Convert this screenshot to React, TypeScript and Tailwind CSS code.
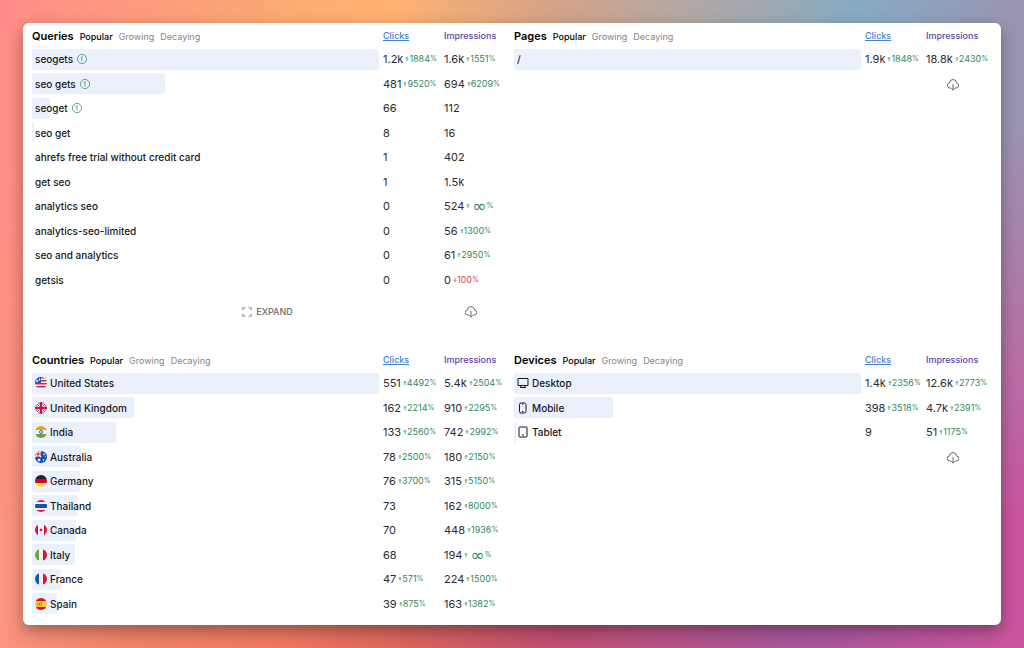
import { useState, type ReactNode } from "react";
import { clsx } from "clsx";

type Trend = { dir: "up" | "down"; value: string };

type Row = {
  label: string;
  bar: number;
  icon?: ReactNode;
  badge?: boolean;
  clicks: string;
  clicksTrend?: Trend;
  impressions: string;
  impressionsTrend?: Trend;
};

const up = (value: string): Trend => ({ dir: "up", value });
const down = (value: string): Trend => ({ dir: "down", value });

const flags: Record<string, ReactNode> = {
  us: (
    <>
      <path fill="#fff" d="M0 0h24v24H0z" />
      <path fill="#d3224a" d="M0 0h24v3H0zM0 6h24v3H0zM0 12h24v3H0zM0 18h24v3H0z" />
      <path fill="#1f4fae" d="M0 0h12v12H0z" />
      <path fill="#fff" d="m4 5 1 2h2L5.500 8.500 6 10.500 4 9.500 2 10.500 2.500 8.500 1 7h2zM9 2l1 2h1.500L10 5.500l.5 2L9 6.500 7.500 7.500 8 5.500 6.500 4H8z" />
    </>
  ),
  gb: (
    <>
      <path fill="#fff" d="M0 0h24v24H0z" />
      <path fill="#1f4fae" d="M0 5v4h6zM0 15v4l6-4zM24 5v4h-6zM24 15v4l-6-4zM5 0h4v6zM15 0h4l-4 6zM5 24h4v-6zM15 24h4l-4-6z" />
      <path fill="#d3123a" d="M10 0h4v10h10v4H14v10h-4V14H0v-4h10z" />
      <path stroke="#d3123a" strokeWidth="2" d="m3 3 6 6M21 3l-6 6M3 21l6-6M21 21l-6-6" />
    </>
  ),
  in: (
    <>
      <path fill="#f2f2f2" d="M0 0h24v24H0z" />
      <path fill="#f59b1c" d="M0 0h24v8H0z" />
      <path fill="#6da544" d="M0 16h24v8H0z" />
      <circle cx="12" cy="12" r="3" fill="#fff" stroke="#2a5db0" strokeWidth="2" />
    </>
  ),
  au: (
    <>
      <path fill="#1650b0" d="M0 0h24v24H0z" />
      <path stroke="#fff" strokeWidth="3" d="M0 0l12 12M12 0 0 12" />
      <path stroke="#fff" strokeWidth="4" d="M6 0v12M0 6h12" />
      <path stroke="#d3123a" strokeWidth="2" d="M6 0v12M0 6h12" />
      <path fill="#fff" d="m8 14 1 2h2l-1 2 1 2H9l-1 1-1-1H5l1-2-1-2h2zM18 4l1 2h1l-1 1v2l-1-1-1 1V7l-1-1h1zM17 16l1 1h1l-1 1v2l-1-1-1 1v-2l-1-1h1zM21 10l1 2-1 1-1-1z" />
    </>
  ),
  de: (
    <>
      <path fill="#222" d="M0 0h24v8H0z" />
      <path fill="#d80027" d="M0 8h24v8H0z" />
      <path fill="#ffda44" d="M0 16h24v8H0z" />
    </>
  ),
  th: (
    <>
      <path fill="#f2f2f2" d="M0 0h24v24H0z" />
      <path fill="#d8204a" d="M0 0h24v4H0zM0 20h24v4H0z" />
      <path fill="#1554b4" d="M0 8h24v8H0z" />
    </>
  ),
  ca: (
    <>
      <path fill="#f6f6f6" d="M0 0h24v24H0z" />
      <path fill="#d8123f" d="M0 0h6v24H0zM18 0h6v24h-6zM12 8l1 2 2 1-1 3h-4l-1-3 2-1z" />
    </>
  ),
  it: (
    <>
      <path fill="#f4f4f4" d="M0 0h24v24H0z" />
      <path fill="#6da544" d="M0 0h8v24H0z" />
      <path fill="#d8123f" d="M16 0h8v24h-8z" />
    </>
  ),
  fr: (
    <>
      <path fill="#f4f4f4" d="M0 0h24v24H0z" />
      <path fill="#1554b4" d="M0 0h8v24H0z" />
      <path fill="#d8123f" d="M16 0h8v24h-8z" />
    </>
  ),
  es: (
    <>
      <path fill="#fdc93c" d="M0 0h24v24H0z" />
      <path fill="#d8122f" d="M0 0h24v6H0zM0 18h24v6H0z" />
      <path fill="#e0641f" d="M5 9h1v7H5zM12 9h1v7h-1zM7 10h4v4l-2 2-2-2z" />
    </>
  ),
};

function Flag({ code }: { code: string }) {
  return (
    <svg viewBox="0 0 24 24" className="size-3 shrink-0 rounded-full" aria-hidden="true">
      {flags[code]}
    </svg>
  );
}

function DeviceIcon({ children }: { children: ReactNode }) {
  return (
    <svg
      viewBox="0 0 24 24"
      className="size-3 shrink-0"
      fill="none"
      stroke="currentColor"
      strokeWidth="2"
      strokeLinejoin="round"
      aria-hidden="true"
    >
      {children}
    </svg>
  );
}

const queries: Row[] = [
  { label: "seogets", bar: 100, badge: true, clicks: "1.2k", clicksTrend: up("1884"), impressions: "1.6k", impressionsTrend: up("1551") },
  { label: "seo gets", bar: 38.4, badge: true, clicks: "481", clicksTrend: up("9520"), impressions: "694", impressionsTrend: up("6209") },
  { label: "seoget", bar: 5.3, badge: true, clicks: "66", impressions: "112" },
  { label: "seo get", bar: 0.6, clicks: "8", impressions: "16" },
  { label: "ahrefs free trial without credit card", bar: 0, clicks: "1", impressions: "402" },
  { label: "get seo", bar: 0, clicks: "1", impressions: "1.5k" },
  { label: "analytics seo", bar: 0, clicks: "0", impressions: "524", impressionsTrend: up("∞") },
  { label: "analytics-seo-limited", bar: 0, clicks: "0", impressions: "56", impressionsTrend: up("1300") },
  { label: "seo and analytics", bar: 0, clicks: "0", impressions: "61", impressionsTrend: up("2950") },
  { label: "getsis", bar: 0, clicks: "0", impressions: "0", impressionsTrend: down("100") },
];

const pages: Row[] = [
  { label: "/", bar: 100, clicks: "1.9k", clicksTrend: up("1848"), impressions: "18.8k", impressionsTrend: up("2430") },
];

const countries: Row[] = [
  { label: "United States", bar: 100, icon: <Flag code="us" />, clicks: "551", clicksTrend: up("4492"), impressions: "5.4k", impressionsTrend: up("2504") },
  { label: "United Kingdom", bar: 29.4, icon: <Flag code="gb" />, clicks: "162", clicksTrend: up("2214"), impressions: "910", impressionsTrend: up("2295") },
  { label: "India", bar: 24.1, icon: <Flag code="in" />, clicks: "133", clicksTrend: up("2560"), impressions: "742", impressionsTrend: up("2992") },
  { label: "Australia", bar: 14.2, icon: <Flag code="au" />, clicks: "78", clicksTrend: up("2500"), impressions: "180", impressionsTrend: up("2150") },
  { label: "Germany", bar: 13.8, icon: <Flag code="de" />, clicks: "76", clicksTrend: up("3700"), impressions: "315", impressionsTrend: up("5150") },
  { label: "Thailand", bar: 13.2, icon: <Flag code="th" />, clicks: "73", impressions: "162", impressionsTrend: up("8000") },
  { label: "Canada", bar: 12.7, icon: <Flag code="ca" />, clicks: "70", impressions: "448", impressionsTrend: up("1936") },
  { label: "Italy", bar: 12.3, icon: <Flag code="it" />, clicks: "68", impressions: "194", impressionsTrend: up("∞") },
  { label: "France", bar: 8.5, icon: <Flag code="fr" />, clicks: "47", clicksTrend: up("571"), impressions: "224", impressionsTrend: up("1500") },
  { label: "Spain", bar: 7.1, icon: <Flag code="es" />, clicks: "39", clicksTrend: up("875"), impressions: "163", impressionsTrend: up("1382") },
];

const devices: Row[] = [
  {
    label: "Desktop",
    bar: 100,
    icon: <DeviceIcon><path d="M2 3h20v14H2zM8 17v4M16 17v4M6 21h12" /></DeviceIcon>,
    clicks: "1.4k",
    clicksTrend: up("2356"),
    impressions: "12.6k",
    impressionsTrend: up("2773"),
  },
  {
    label: "Mobile",
    bar: 28.4,
    icon: <DeviceIcon><rect x="5" y="2" width="13" height="20" rx="3" /><path d="M10 4h3M10 19h3" /></DeviceIcon>,
    clicks: "398",
    clicksTrend: up("3518"),
    impressions: "4.7k",
    impressionsTrend: up("2391"),
  },
  {
    label: "Tablet",
    bar: 0.6,
    icon: <DeviceIcon><rect x="4" y="2" width="16" height="20" rx="1" /><path d="M10 18h4" /></DeviceIcon>,
    clicks: "9",
    impressions: "51",
    impressionsTrend: up("1175"),
  },
];

const tabs = ["Popular", "Growing", "Decaying"];

function OneBadge() {
  return (
    <svg viewBox="0 0 24 24" className="ml-px size-[10px] shrink-0 text-[#3f9a72]" fill="none" stroke="currentColor" strokeWidth="2" aria-hidden="true">
      <circle cx="12" cy="12" r="11" />
      <path d="m9 9 3-3v12" />
    </svg>
  );
}

function CloudDownload() {
  return (
    <svg viewBox="0 0 24 24" className="size-3" fill="none" stroke="currentColor" strokeWidth="2" strokeLinecap="round" strokeLinejoin="round" aria-hidden="true">
      <path d="M7 18H6a5 5 0 0 1-1-10A7 7 0 0 1 19 8a5 5 0 0 1-1 10h-1" />
      <path d="M12 11v11M9 19l3 3 3-3" />
    </svg>
  );
}

function TrendValue({ trend }: { trend: Trend }) {
  return (
    <span className={clsx("flex items-center text-[9px]", trend.dir === "up" ? "text-[#2f8a5e]" : "text-[#dc3d5c]")}>
      <svg viewBox="0 0 10 10" className="size-1" fill="none" stroke="currentColor" strokeWidth="2" aria-hidden="true">
        <path d={trend.dir === "up" ? "M5 10V1M2 4l3-3 3 3" : "M5 0v9M2 6l3 3 3-3"} />
      </svg>
      {trend.value === "∞" ? <span className="ml-0.5 font-['DejaVu_Sans',sans-serif] text-[17px] leading-3">∞</span> : trend.value}
      <span className="text-[7px]">%</span>
    </span>
  );
}

function Metric({ value, trend }: { value: string; trend?: Trend }) {
  return (
    <td className="p-0 text-[11px] text-[#2b2d33]">
      <div className="flex items-center gap-0.5 whitespace-nowrap">
        {value}
        {trend && <TrendValue trend={trend} />}
      </div>
    </td>
  );
}

type PanelProps = { title: string; rows: Row[]; expandable?: boolean; footer?: boolean };

function Panel({ title, rows, expandable = false, footer = true }: PanelProps) {
  const [tab, setTab] = useState("Popular");

  return (
    <section>
      <table className="w-full table-fixed border-collapse text-left text-[10px] leading-4">
        <thead>
          <tr className="h-[22px]">
            <th className="p-0 font-normal">
              <div className="flex items-baseline gap-1.5">
                <h2 className="text-[11px] font-semibold text-black">{title}</h2>
                <div className="flex gap-1.5 text-[9px]">
                  {tabs.map((name) => (
                    <button
                      key={name}
                      type="button"
                      onClick={() => setTab(name)}
                      className={tab === name ? "font-medium text-black" : "text-[#85858a]"}
                    >
                      {name}
                    </button>
                  ))}
                </div>
              </div>
            </th>
            <th className="w-[61px] p-0 text-[9px] font-medium text-[#3f7fd0]">
              <button type="button" className="underline">Clicks</button>
            </th>
            <th className="w-[67px] p-0 text-[9px] font-medium text-[#5b43a8]">
              <button type="button">Impressions</button>
            </th>
          </tr>
        </thead>
        <tbody>
          {rows.map((row) => (
            <tr key={row.label} className="h-6 even:h-[25px]">
              <td className="p-0 pr-1">
                <div className="relative flex h-[21px] items-center px-[3px] font-medium text-[#16181d]">
                  <div className="absolute inset-y-0 left-0 rounded-xs bg-[#ebf1fc]" style={{ width: `${row.bar}%` }} />
                  <span className="relative flex items-center gap-[3px]">
                    {row.icon}
                    {row.label}
                    {row.badge && <OneBadge />}
                  </span>
                </div>
              </td>
              <Metric value={row.clicks} trend={row.clicksTrend} />
              <Metric value={row.impressions} trend={row.impressionsTrend} />
            </tr>
          ))}
        </tbody>
      </table>
      {footer && (
        <div className={clsx("grid grid-cols-[1fr_auto_1fr] items-center pr-2 text-[#6b6b70]", expandable ? "h-10" : "h-7")}>
          {expandable && (
            <button type="button" className="col-start-2 flex items-center gap-1 text-[9px] font-medium">
              <svg viewBox="0 0 24 24" className="size-[10px]" fill="none" stroke="currentColor" strokeWidth="2" aria-hidden="true">
                <path d="M2 8V2h6M16 2h6v6M22 16v6h-6M8 22H2v-6" />
              </svg>
              EXPAND
            </button>
          )}
          <button type="button" aria-label={`Download ${title}`} className="col-start-3 mr-[26px] justify-self-end">
            <CloudDownload />
          </button>
        </div>
      )}
    </section>
  );
}

export default function App() {
  return (
    <main className="relative min-h-screen bg-[linear-gradient(to_right,#fb9480,#f08468_12%,#ee7860_28%,#d9645c_40%,#c04f72_54%,#a8579c_78%,#cb569c)] p-[23px] font-[Inter,sans-serif] before:absolute before:inset-0 before:bg-[linear-gradient(to_right,#ff8c88,#fba873_26%,#ffb272_38%,#d6a386_53%,#b0a8a5_68%,#86abc3_84%,#9c93b0)] before:[mask-image:linear-gradient(black_20%,transparent_80%)]">
      <div className="relative grid grid-cols-2 gap-x-[3px] gap-y-[17px] rounded-md bg-white pt-0.5 pr-2 pb-[9px] pl-[9px] shadow-[0_6px_16px_rgba(0,0,0,0.35)]">
        <Panel title="Queries" rows={queries} expandable />
        <Panel title="Pages" rows={pages} />
        <Panel title="Countries" rows={countries} footer={false} />
        <Panel title="Devices" rows={devices} />
      </div>
    </main>
  );
}
